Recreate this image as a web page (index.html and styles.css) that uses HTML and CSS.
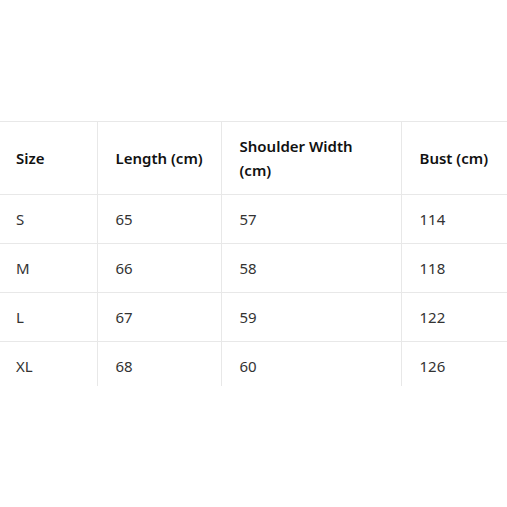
FILE: index.html
```html
<!DOCTYPE html>
<html lang="en">
<head>
<meta charset="utf-8">
<title>Size chart</title>
<link rel="stylesheet" href="styles.css">
</head>
<body>
<main class="page">
  <table class="size-table">
    <colgroup>
      <col class="c1"><col class="c2"><col class="c3"><col class="c4">
    </colgroup>
    <thead>
      <tr><th>Size</th><th>Length (cm)</th><th>Shoulder Width (cm)</th><th>Bust (cm)</th></tr>
    </thead>
    <tbody>
      <tr><td>S</td><td>65</td><td>57</td><td>114</td></tr>
      <tr><td>M</td><td>66</td><td>58</td><td>118</td></tr>
      <tr><td>L</td><td>67</td><td>59</td><td>122</td></tr>
      <tr class="last"><td>XL</td><td>68</td><td>60</td><td>126</td></tr>
    </tbody>
  </table>
</main>
</body>
</html>
```
FILE: styles.css
```css
html, body {
  margin: 0;
  padding: 0;
  background: #fff;
}
.page {
  height: 507px;
  display: flex;
  align-items: center;
}
.size-table {
  border-collapse: collapse;
  table-layout: fixed;
  width: 507px;
  font-family: "Noto Sans", "Open Sans", sans-serif;
  font-size: 15px;
  line-height: 24px;
  color: #333;
}
.c1 { width: 97px; }
.c2 { width: 124px; }
.c3 { width: 180px; }
.c4 { width: 106px; }
.size-table th,
.size-table td {
  text-align: left;
  padding: 12px 4px 12px 18px;
  border-left: 1px solid #e8e8e8;
  border-top: 1px solid #e8e8e8;
  vertical-align: middle;
}
.size-table th:first-child,
.size-table td:first-child {
  border-left: none;
  padding-left: 16px;
}
.size-table th:nth-child(3) {
  padding-right: 40px;
}
.size-table th {
  font-weight: 600;
  color: #111;
}
.size-table .last td {
  padding-bottom: 8px;
}
```
